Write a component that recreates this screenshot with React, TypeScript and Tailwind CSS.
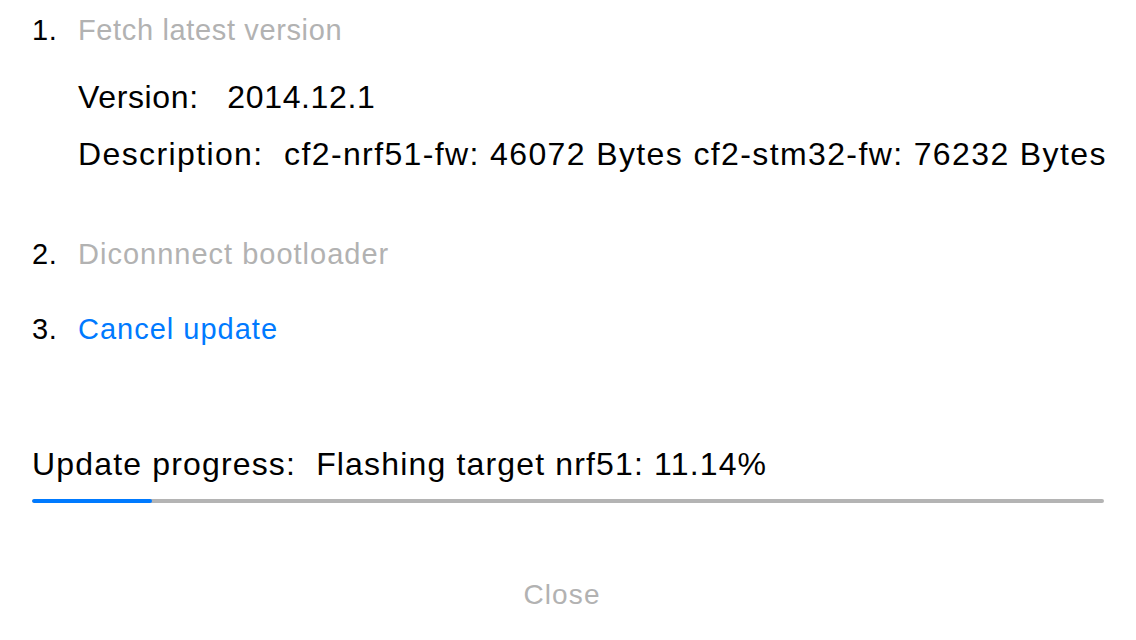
import React from 'react';

const font = { fontFamily: '"Liberation Sans", Arial, sans-serif' };

function Step({ n, children }: { n: string; children: React.ReactNode }) {
  return (
    <div className="flex h-10 items-center">
      <span className="w-[46px] text-[29px] text-black">{n}</span>
      {children}
    </div>
  );
}

export default function App() {
  return (
    <div className="flex h-[640px] w-[1136px] flex-col bg-white px-8 pt-[11px] tracking-[0.64px]" style={font}>
      <Step n="1.">
        <span className="text-[29px] text-[#b2b2b2]">Fetch latest version</span>
      </Step>
      <div className="ml-[46px] mt-[26px] flex h-10 items-center whitespace-pre text-[32px] text-black">
        {'Version:   2014.12.1'}
      </div>
      <div className="ml-[46px] mt-[17px] flex h-10 items-center whitespace-pre text-[32px] tracking-[1.38px] text-black">
        {'Description:  cf2-nrf51-fw: 46072 Bytes cf2-stm32-fw: 76232 Bytes'}
      </div>
      <div className="mt-[61px]">
        <Step n="2.">
          <span className="text-[29px] tracking-[1px] text-[#b2b2b2]">Diconnnect bootloader</span>
        </Step>
      </div>
      <div className="mt-[35px]">
        <Step n="3.">
          <button className="text-[29px] tracking-[1px] text-[#007aff]">Cancel update</button>
        </Step>
      </div>
      <div className="mt-[94px] flex h-10 items-center whitespace-pre text-[32px] tracking-[1.16px] text-black">
        {'Update progress:  Flashing target nrf51: 11.14%'}
      </div>
      <div className="mt-[15px] h-1 w-[1072px] overflow-hidden rounded-full bg-[#b4b4b4]">
        <div className="h-full w-[120px] rounded-full bg-[#007aff]" />
      </div>
      <div className="mt-[72px] flex h-10 items-center justify-center pr-3">
        <button className="text-[28px] tracking-[1.12px] text-[#b2b2b2]">Close</button>
      </div>
    </div>
  );
}
